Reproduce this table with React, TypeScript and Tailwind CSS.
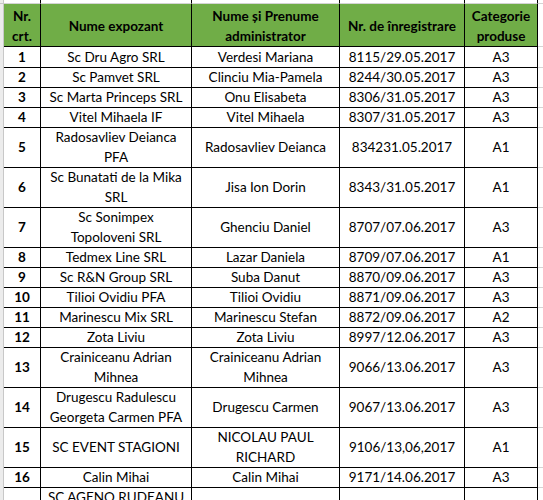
import React from "react";

type Row = {
  nr: string;
  firma: string[];
  admin: string[];
  reg: string;
  cat: string;
  tall?: boolean;
};

const rows: Row[] = [
  { nr: "1", firma: ["Sc Dru Agro SRL"], admin: ["Verdesi Mariana"], reg: "8115/29.05.2017", cat: "A3" },
  { nr: "2", firma: ["Sc Pamvet SRL"], admin: ["Clinciu Mia-Pamela"], reg: "8244/30.05.2017", cat: "A3" },
  { nr: "3", firma: ["Sc Marta Princeps SRL"], admin: ["Onu Elisabeta"], reg: "8306/31.05.2017", cat: "A3" },
  { nr: "4", firma: ["Vitel Mihaela IF"], admin: ["Vitel Mihaela"], reg: "8307/31.05.2017", cat: "A3" },
  { nr: "5", firma: ["Radosavliev Deianca", "PFA"], admin: ["Radosavliev Deianca"], reg: "834231.05.2017", cat: "A1", tall: true },
  { nr: "6", firma: ["Sc Bunatati de la Mika", "SRL"], admin: ["Jisa Ion Dorin"], reg: "8343/31.05.2017", cat: "A1", tall: true },
  { nr: "7", firma: ["Sc Sonimpex", "Topoloveni SRL"], admin: ["Ghenciu Daniel"], reg: "8707/07.06.2017", cat: "A3", tall: true },
  { nr: "8", firma: ["Tedmex Line SRL"], admin: ["Lazar Daniela"], reg: "8709/07.06.2017", cat: "A1" },
  { nr: "9", firma: ["Sc R&N Group SRL"], admin: ["Suba Danut"], reg: "8870/09.06.2017", cat: "A3" },
  { nr: "10", firma: ["Tilioi Ovidiu PFA"], admin: ["Tilioi Ovidiu"], reg: "8871/09.06.2017", cat: "A3" },
  { nr: "11", firma: ["Marinescu Mix SRL"], admin: ["Marinescu Stefan"], reg: "8872/09.06.2017", cat: "A2" },
  { nr: "12", firma: ["Zota Liviu"], admin: ["Zota Liviu"], reg: "8997/12.06.2017", cat: "A3" },
  { nr: "13", firma: ["Crainiceanu Adrian", "Mihnea"], admin: ["Crainiceanu Adrian", "Mihnea"], reg: "9066/13.06.2017", cat: "A3", tall: true },
  { nr: "14", firma: ["Drugescu Radulescu", "Georgeta Carmen PFA"], admin: ["Drugescu Carmen"], reg: "9067/13.06.2017", cat: "A3", tall: true },
  { nr: "15", firma: ["SC EVENT STAGIONI"], admin: ["NICOLAU PAUL", "RICHARD"], reg: "9106/13,06,2017", cat: "A1", tall: true },
  { nr: "16", firma: ["Calin Mihai"], admin: ["Calin Mihai"], reg: "9171/14.06.2017", cat: "A3" },
  { nr: "17", firma: ["SC AGENO RUDEANU", "SRL"], admin: ["Rudeanu Gheorghe"], reg: "9172/14.06.2017", cat: "A3", tall: true },
];

// 4px gutter, five table columns, then the loose gridline area on the right
const cols = "grid grid-cols-[4px_37px_151px_148px_125px_73px_1fr]";

function Cell({ lines, bold }: { lines: string[]; bold?: boolean }) {
  return (
    <div
      className={`flex flex-col items-center justify-center border-b border-r border-black pt-[3px] text-center leading-[20px] ${
        bold ? "font-bold" : ""
      }`}
    >
      {lines.map((l, i) => (
        <span key={i} className="whitespace-nowrap">
          {l}
        </span>
      ))}
    </div>
  );
}

function HeadCell({ lines }: { lines: string[] }) {
  return (
    <div className="flex flex-col items-center justify-center border-b border-r border-black bg-[#70ad47] pt-[2px] font-bold leading-[20px]">
      {lines.map((l, i) => (
        <span key={i} className="whitespace-nowrap">
          {l}
        </span>
      ))}
    </div>
  );
}

export default function App() {
  return (
    <div
      className="h-[500px] w-[543px] overflow-hidden bg-white text-[13.5px] text-black"
      style={{ fontFamily: "Lato, 'Liberation Sans', sans-serif" }}
    >
      {/* gridline row above the table */}
      <div className={`${cols} h-[4px]`}>
        <div className="border-b border-r border-[#c8c8c8] bg-[#ececec]" />
        <div className="border-b border-r border-b-[#d4d4d4] border-r-black" />
        <div className="border-b border-r border-b-[#d4d4d4] border-r-black" />
        <div className="border-b border-r border-b-[#d4d4d4] border-r-black" />
        <div className="border-b border-r border-b-[#d4d4d4] border-r-black" />
        <div className="border-b border-r border-b-[#d4d4d4] border-r-black" />
        <div className="border-b border-[#d4d4d4]" />
      </div>

      {/* header */}
      <div className={`${cols} h-[40px]`}>
        <div className="border-b border-r border-[#c8c8c8] bg-[#ececec]" />
        <HeadCell lines={["Nr.", "crt."]} />
        <HeadCell lines={["Nume expozant"]} />
        <HeadCell lines={["Nume și Prenume", "administrator"]} />
        <HeadCell lines={["Nr. de înregistrare"]} />
        <HeadCell lines={["Categorie", "produse"]} />
        <div className="border-b border-[#d4d4d4]" />
      </div>

      {/* body */}
      {rows.map((r) => (
        <div key={r.nr} className={`${cols} ${r.tall ? "h-[40px]" : "h-[20px]"}`}>
          <div className="border-b border-r border-[#c8c8c8] bg-[#ececec]" />
          <Cell lines={[r.nr]} bold />
          <Cell lines={r.firma} />
          <Cell lines={r.admin} />
          <Cell lines={[r.reg]} />
          <Cell lines={[r.cat]} />
          <div className="border-b border-[#d4d4d4]" />
        </div>
      ))}
    </div>
  );
}
